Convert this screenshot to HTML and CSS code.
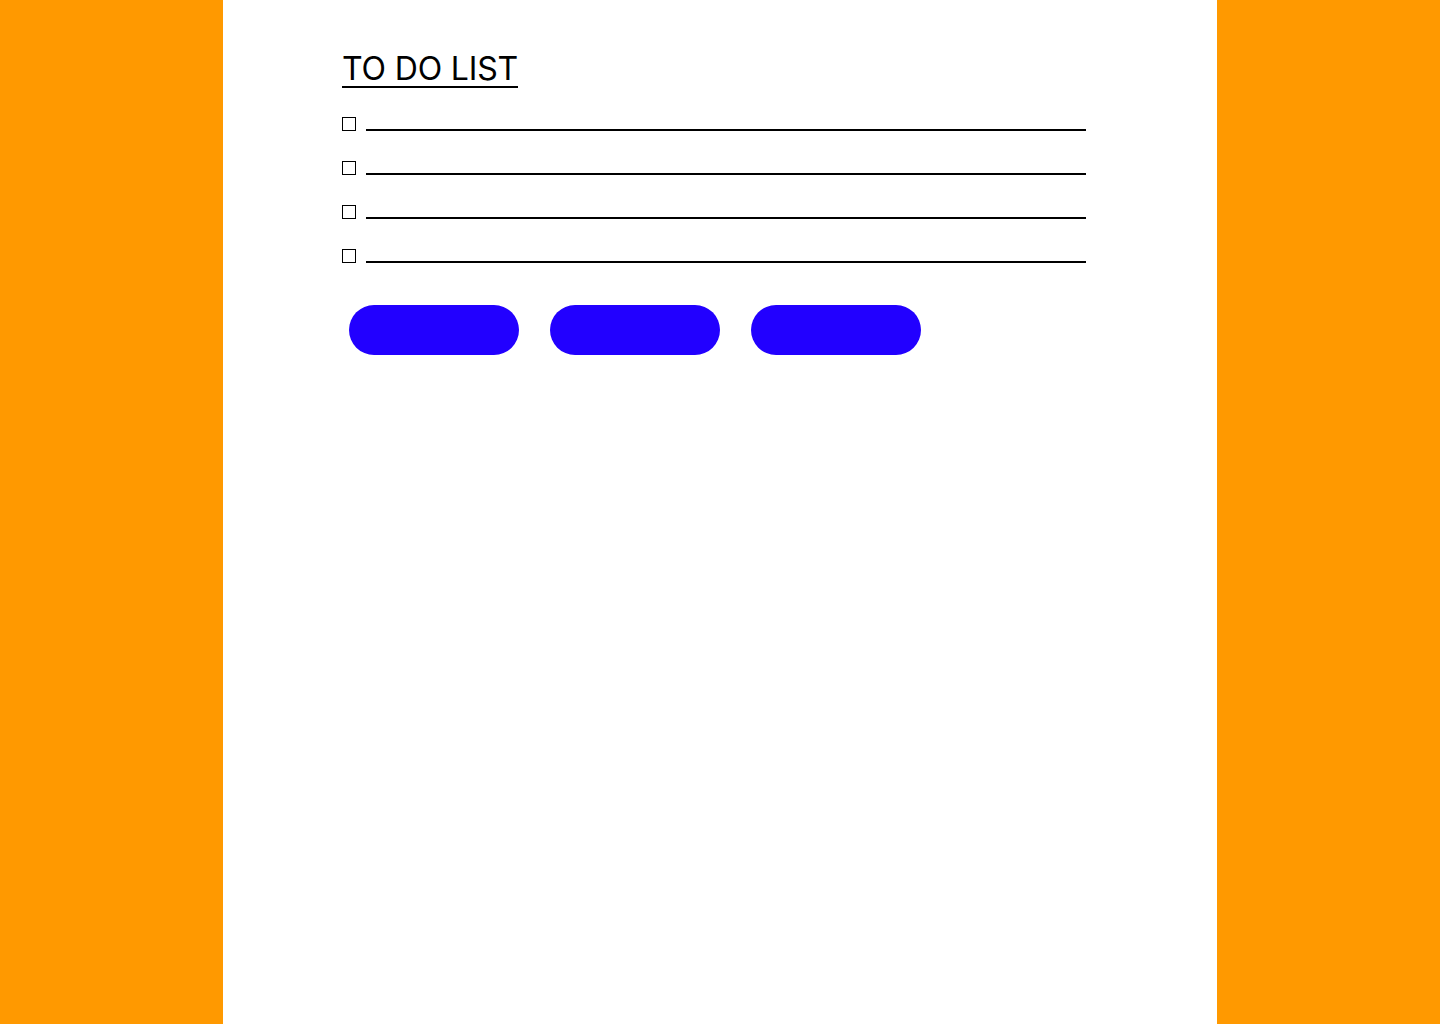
FILE: index.html
```html
<!DOCTYPE html>
<html lang="en">
<head>
<meta charset="utf-8">
<title>To Do List</title>
<link rel="stylesheet" href="styles.css">
</head>
<body>
<main class="page">
  <h1 class="title">TO DO LIST</h1>
  <ul class="list">
    <li class="item"><span class="box"></span><span class="line"></span></li>
    <li class="item"><span class="box"></span><span class="line"></span></li>
    <li class="item"><span class="box"></span><span class="line"></span></li>
    <li class="item"><span class="box"></span><span class="line"></span></li>
  </ul>
  <div class="buttons">
    <button class="btn" type="button"></button>
    <button class="btn" type="button"></button>
    <button class="btn" type="button"></button>
  </div>
</main>
</body>
</html>
```
FILE: styles.css
```css
html, body {
  margin: 0;
  padding: 0;
  height: 100%;
}
body {
  background: #ff9900;
  font-family: Inter, "Liberation Sans", sans-serif;
}
.page {
  width: 994px;
  min-height: 1024px;
  margin: 0 auto;
  background: #ffffff;
  box-sizing: border-box;
  padding: 48px 131px 0 119px;
}
.title {
  display: inline-block;
  margin: 0;
  font-size: 32px;
  font-weight: 400;
  line-height: 34px;
  letter-spacing: -0.15px;
  color: #000;
  border-bottom: 2px solid #000;
  padding: 4px 0 0 0;
}
.list {
  list-style: none;
  margin: 22px 0 0 0;
  padding: 0;
}
.item {
  display: flex;
  align-items: flex-end;
  height: 44px;
}
.item:first-child {
  height: 21px;
}
.box {
  width: 12px;
  height: 12px;
  border: 1px solid #000;
  margin-bottom: 0;
}
.line {
  flex: 1;
  height: 2px;
  background: #000;
  margin-left: 10px;
}
.buttons {
  display: flex;
  gap: 31px;
  margin-top: 42px;
  padding-left: 7px;
}
.btn {
  width: 170px;
  height: 50px;
  border: none;
  border-radius: 25px;
  background: #2200ff;
  padding: 0;
}
```
